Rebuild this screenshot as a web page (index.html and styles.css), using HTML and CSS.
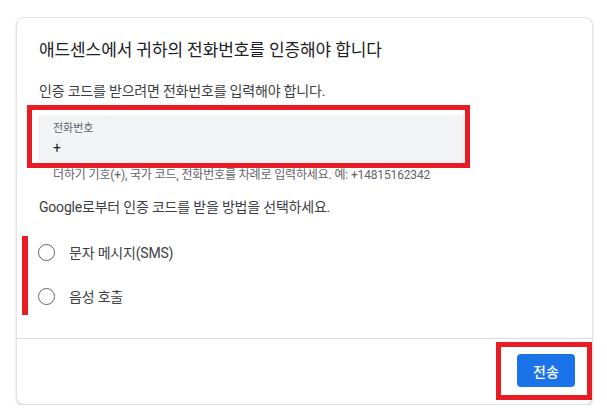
FILE: index.html
```html
<!DOCTYPE html>
<html lang="ko">
<head>
  <meta charset="UTF-8">
  <meta name="viewport" content="width=device-width, initial-scale=1.0">
  <title>전화번호 인증</title>
  <link rel="stylesheet" href="styles.css">
</head>
<body>
  <div class="card">
    <div class="card-body">
      <h1 class="title">애드센스에서 귀하의 전화번호를 인증해야 합니다</h1>
      <p class="desc">인증 코드를 받으려면 전화번호를 입력해야 합니다.</p>

      <div class="mark mark-field">
        <div class="field">
          <div class="field-label">전화번호</div>
          <div class="field-value">+</div>
        </div>
      </div>
      <p class="hint">더하기 기호(+), 국가 코드, 전화번호를 차례로 입력하세요. 예: +14815162342</p>

      <p class="desc method">Google로부터 인증 코드를 받을 방법을 선택하세요.</p>

      <div class="radio-group">
        <label class="radio"><span class="circle"></span>문자 메시지(SMS)</label>
        <label class="radio"><span class="circle"></span>음성 호출</label>
      </div>
    </div>

    <div class="card-footer">
      <div class="mark mark-btn">
        <button class="btn">전송</button>
      </div>
    </div>
  </div>
</body>
</html>
```

FILE: styles.css
```css
* { box-sizing: border-box; }
body { margin: 0; padding: 17px 0 0 16px; background: #fff; font-family: Roboto, "Noto Sans CJK KR", sans-serif; color: #202124; }

.card { width: 577px; border: 1px solid #e3e3e3; border-radius: 8px; box-shadow: 0 1px 2px rgba(60, 64, 67, .25); background: #fff; }
.card-body { padding: 20px 22px 23px; }

.title { margin: 0; font-size: 17px; font-weight: 400; line-height: 24px; color: #202124; letter-spacing: -0.1px; }
.desc { margin: 19px 0 0; font-size: 14px; line-height: 20px; color: #3c4043; letter-spacing: -0.2px; }
.method { margin-top: 14px; }

.mark { border: 5px solid #e81c24; }
.mark-field { width: 443px; margin: 4px 0 0 -12px; padding: 5px 0 0 6px; }
.field { width: 427px; height: 48px; background: #f1f3f4; padding: 7px 0 0 15px; }
.field-label { font-size: 11px; line-height: 14px; color: #5f6368; }
.field-value { margin-top: 3px; font-size: 14px; line-height: 18px; color: #202124; }

.hint { margin: -1px 0 0 14px; font-size: 12px; line-height: 16px; color: #5f6368; letter-spacing: -0.15px; }

.radio-group { margin: 19px 0 0 -17px; border-left: 6px solid #e81c24; padding-bottom: 3px; display: flex; flex-direction: column; gap: 12px; }
.radio { display: flex; align-items: center; height: 32px; padding-left: 10px; font-size: 14px; color: #3c4043; letter-spacing: -0.2px; }
.circle { width: 17px; height: 17px; border: 1.5px solid #5f6368; border-radius: 50%; margin-right: 14px; }

.card-footer { border-top: 1px solid #dadce0; display: flex; justify-content: flex-end; padding: 3px 0 4px 0; }
.mark-btn { width: 96px; height: 58px; padding: 7px 12px 0 16px; }
.btn { width: 58px; height: 33px; border: none; border-radius: 4px; background: #1a73e8; color: #fff; font-family: Roboto, "Noto Sans CJK KR", sans-serif; font-size: 14px; font-weight: 500; cursor: pointer; }
```
